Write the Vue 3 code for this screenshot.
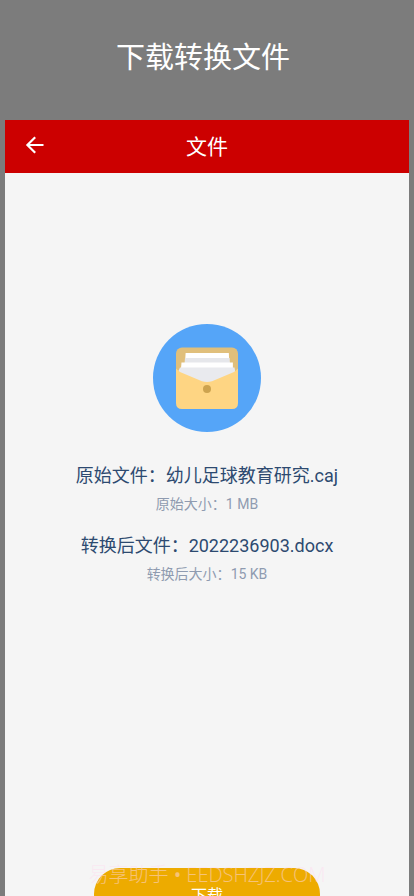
<script setup>
const files = [
  { label: '原始文件', name: '幼儿足球教育研究.caj', sizeLabel: '原始大小', size: '1 MB' },
  { label: '转换后文件', name: '2022236903.docx', sizeLabel: '转换后大小', size: '15 KB' },
]
</script>

<template>
  <div class="page">
    <h1 class="caption">下载转换文件</h1>
    <main class="screen">
      <header class="bar">
        <button class="back" type="button" aria-label="返回">
          <svg viewBox="0 0 24 24" width="24" height="24" aria-hidden="true">
            <path d="M20.500 12H4.600M12.200 4.200L4.400 12l7.800 7.800" fill="none" stroke="#fff" stroke-width="2.200" />
          </svg>
        </button>
        <h2 class="bar-title">文件</h2>
      </header>

      <section class="content">
        <svg class="picture" viewBox="0 0 108 108" width="108" height="108" aria-hidden="true">
          <circle cx="54" cy="54" r="54" fill="#55a5f8" />
          <rect x="23" y="23.500" width="62" height="40" rx="6" fill="#e0bf7b" />
          <path d="M32.600 29h43.200l1 18H31.500z" fill="#fff" />
          <path d="M32 34h44.600l.6 10H31.200z" fill="#e6e7eb" />
          <path d="M28.500 38.600h51.400v6H28z" fill="#fff" />
          <path d="M27 43.500h54.500l1 6L54 62 25 48z" fill="#e9eaee" />
          <path d="M23 44.500l4 3.400 22 9.400q5 1.600 10 0l22-9.400 4-3.400V79q0 6-6 6H29q-6 0-6-6z" fill="#fed583" />
          <circle cx="54" cy="65" r="4" fill="#cda34f" />
        </svg>
        <dl class="files">
          <div v-for="file in files" :key="file.name" class="file">
            <div class="name"><dt>{{ file.label }}：</dt><dd>{{ file.name }}</dd></div>
            <div class="size"><dt>{{ file.sizeLabel }}：</dt><dd>{{ file.size }}</dd></div>
          </div>
        </dl>
      </section>

      <footer class="actions">
        <button class="download" type="button">下载</button>
        <span class="watermark">易享助手 <b>•</b> EEDSHZJZ.COM</span>
      </footer>
    </main>
  </div>
</template>

<style>
body {
  background: #7c7c7c;
}
</style>

<style scoped>
.page {
  display: flex;
  flex-direction: column;
  height: 100vh;
  overflow: hidden;
  padding: 0 5px;
  box-sizing: border-box;
  background: #7c7c7c;
  font-family: Roboto, "Noto Sans CJK SC", sans-serif;
}

.caption {
  flex: none;
  margin: 0;
  padding: 36px 8px 40px 0;
  line-height: 44px;
  font-size: 29px;
  font-weight: 400;
  text-align: center;
  color: #fff;
}

.screen {
  flex: 1;
  display: flex;
  flex-direction: column;
  min-height: 0;
  background: #f5f5f5;
}

.bar {
  flex: none;
  display: grid;
  grid-template-columns: 60px 1fr 60px;
  align-items: center;
  height: 53px;
  background: #cc0000;
  color: #fff;
}

.back {
  display: flex;
  justify-content: center;
  padding: 0 0 4px;
  border: 0;
  background: none;
}

.bar-title {
  margin: 0;
  font-size: 21px;
  font-weight: 400;
  line-height: 32px;
  text-align: center;
}

.content {
  flex: 1;
  display: flex;
  flex-direction: column;
  align-items: center;
  padding-top: 151px;
}

.picture {
  flex: none;
}

.files {
  display: flex;
  flex-direction: column;
  gap: 14px;
  margin: 28px 0 0;
}

.name,
.size {
  display: flex;
  justify-content: center;
  white-space: nowrap;
}

.name {
  font-size: 18px;
  line-height: 32px;
  color: #2d4a70;
}

.size {
  font-size: 14px;
  line-height: 24px;
  color: #8f9bb0;
}

dd {
  margin: 0;
}

.actions {
  position: relative;
  flex: none;
  display: flex;
  justify-content: center;
  height: 28px;
}

.download {
  flex: none;
  width: 56%;
  height: 52px;
  padding: 0;
  border: 0;
  border-radius: 26px;
  background: #edab00;
  color: #fff;
  font: inherit;
  font-size: 16px;
}

.watermark {
  position: absolute;
  top: -7px;
  left: 0;
  right: 0;
  text-align: center;
  white-space: nowrap;
  font-family: "Open Sans", "Noto Sans CJK SC", sans-serif;
  font-size: 20px;
  font-weight: 300;
  line-height: 28px;
  color: rgba(255, 220, 240, 0.5);
  pointer-events: none;
}
</style>
